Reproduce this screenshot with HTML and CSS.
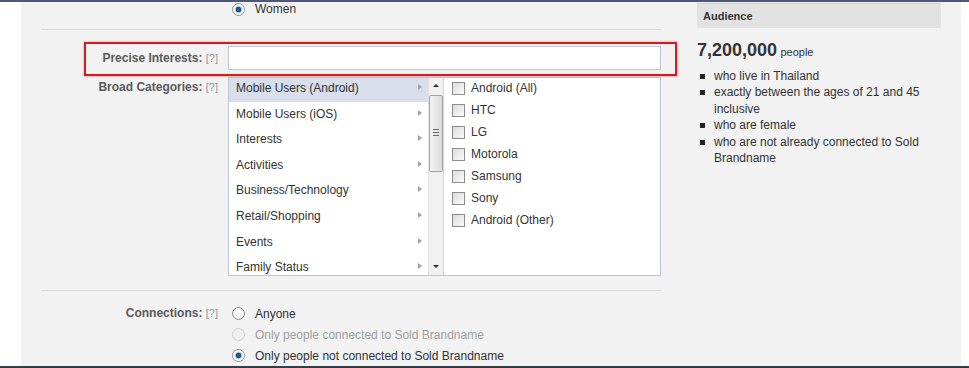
FILE: index.html
```html
<!DOCTYPE html>
<html lang="en">
<head>
    <meta charset="UTF-8">
    <title>Ad Targeting</title>
    <link rel="stylesheet" href="styles.css">
</head>
<body>
    <div class="topbar"></div>
    <div class="page">
        <div class="panel">
            <div class="form">
                <!-- Gender (scrolled) -->
                <div class="row row-women">
                    <div class="label"></div>
                    <div class="options">
                        <div class="opt"><span class="radio checked"></span>Women</div>
                    </div>
                </div>

                <div class="sep sep-top"></div>

                <!-- Precise Interests -->
                <div class="row row-precise">
                    <div class="label">Precise Interests: <span class="help">[?]</span></div>
                    <input class="text-input" type="text">
                </div>

                <!-- Broad Categories -->
                <div class="row row-broad">
                    <div class="label">Broad Categories: <span class="help">[?]</span></div>
                    <div class="picker">
                        <ul class="cats">
                            <li class="active">Mobile Users (Android)<span class="arrow"></span></li>
                            <li>Mobile Users (iOS)<span class="arrow"></span></li>
                            <li>Interests<span class="arrow"></span></li>
                            <li>Activities<span class="arrow"></span></li>
                            <li>Business/Technology<span class="arrow"></span></li>
                            <li>Retail/Shopping<span class="arrow"></span></li>
                            <li>Events<span class="arrow"></span></li>
                            <li>Family Status<span class="arrow"></span></li>
                        </ul>
                        <div class="scrollbar">
                            <span class="sb-up"></span>
                            <div class="sb-thumb"><span class="grip"></span></div>
                            <span class="sb-down"></span>
                        </div>
                        <ul class="subcats">
                            <li><span class="check"></span>Android (All)</li>
                            <li><span class="check"></span>HTC</li>
                            <li><span class="check"></span>LG</li>
                            <li><span class="check"></span>Motorola</li>
                            <li><span class="check"></span>Samsung</li>
                            <li><span class="check"></span>Sony</li>
                            <li><span class="check"></span>Android (Other)</li>
                        </ul>
                    </div>
                </div>

                <div class="sep sep-bottom"></div>

                <!-- Connections -->
                <div class="row row-conn">
                    <div class="label">Connections: <span class="help">[?]</span></div>
                    <div class="options">
                        <div class="opt"><span class="radio"></span>Anyone</div>
                        <div class="opt disabled"><span class="radio"></span>Only people connected to Sold Brandname</div>
                        <div class="opt"><span class="radio checked"></span>Only people not connected to Sold Brandname</div>
                    </div>
                </div>
            </div>

            <!-- Estimated audience -->
            <div class="audience">
                <div class="audience-head">Audience</div>
                <div class="reach"><span class="reach-num">7,200,000</span> <span class="reach-unit">people</span></div>
                <ul class="reach-list">
                    <li>who live in Thailand</li>
                    <li>exactly between the ages of 21 and 45 inclusive</li>
                    <li>who are female</li>
                    <li>who are not already connected to Sold Brandname</li>
                </ul>
            </div>
        </div>
    </div>
    <div class="bottombar"></div>
</body>
</html>
```

FILE: styles.css
```css
/* page frame */
body {
    margin: 0;
    padding: 0;
    background: #fff;
    font-family: "Liberation Sans", Arial, sans-serif;
    font-size: 12px;
    color: #333;
}

.topbar {
    height: 2px;
    background: #4d5776;
}

.bottombar {
    height: 2px;
    background: #363c46;
}

.page {
    height: 364px;
    overflow: hidden;
    padding-left: 21px;
}

.panel {
    width: 940px;
    height: 364px;
    background: #f2f2f2;
    display: flex;
    gap: 36px;
    padding-left: 20px;
    box-sizing: border-box;
}

/* form column */
.form {
    width: 620px;
}

.row {
    display: flex;
    gap: 10px;
}

.label {
    width: 177px;
    flex-shrink: 0;
    text-align: right;
    font-weight: bold;
    color: #5a5a5a;
}

.help {
    font-weight: normal;
    font-size: 11px;
    color: #999;
}

.sep {
    height: 1px;
    background: #dcdcdc;
}

.sep-top {
    margin-top: 13px;
}

.sep-bottom {
    margin-top: 14px;
}

.row-women {
    height: 13px;
    padding-top: 1px;
    line-height: 13px;
}

.row-precise {
    position: relative;
    margin-top: 16px;
    align-items: center;
}

/* red annotation round the field */
.row-precise::after {
    content: "";
    position: absolute;
    left: 43px;
    right: -16px;
    top: -4px;
    bottom: -6px;
    border: 2px solid #e0161b;
    box-shadow: 0 0 2px rgba(224, 22, 27, 0.5);
    pointer-events: none;
}

.text-input {
    width: 433px;
    height: 24px;
    margin: 0;
    padding: 0 4px;
    box-sizing: border-box;
    border: 1px solid #bdc7d8;
    background: #fff;
    font-family: inherit;
    font-size: 12px;
}

.row-broad {
    margin-top: 7px;
    align-items: flex-start;
}

.row-broad .label {
    line-height: 20px;
}

.row-conn {
    margin-top: 12px;
}

.row-conn .label {
    line-height: 21px;
}

/* radios */
.options {
    padding-left: 4px;
}

.opt {
    display: flex;
    align-items: center;
    height: 21px;
    color: #333;
}

.row-women .opt {
    height: 13px;
}

.opt.disabled {
    color: #a0a0a0;
}

.radio {
    width: 11px;
    height: 11px;
    border: 1px solid #8f8f8f;
    border-radius: 50%;
    margin-right: 10px;
    background: radial-gradient(circle at 50% 40%, #fff 0, #e6e6e6 100%);
}

.radio.checked {
    background: radial-gradient(circle, #2b6ea3 0, #15476f 2.5px, #a9c3d8 3px, #fff 4.5px);
}

.opt.disabled .radio {
    border-color: #cfcfcf;
    background: #f0f0f0;
}

/* category picker */
.picker {
    width: 433px;
    height: 199px;
    box-sizing: border-box;
    border: 1px solid #bdc7d8;
    background: #fff;
    display: flex;
    overflow: hidden;
}

.cats,
.subcats {
    list-style: none;
    margin: 0;
    padding: 0;
}

.cats {
    width: 199px;
    flex-shrink: 0;
}

.cats li {
    height: 24px;
    line-height: 20px;
    margin-bottom: 1.6px;
    padding: 0 6px 0 7px;
    display: flex;
    justify-content: space-between;
    align-items: flex-start;
}

.cats li.active {
    background: #d8dfea;
}

.arrow {
    width: 0;
    height: 0;
    margin-top: 6px;
    border-left: 4px solid #a3a3a3;
    border-top: 3.5px solid transparent;
    border-bottom: 3.5px solid transparent;
}

.scrollbar {
    width: 16px;
    flex-shrink: 0;
    background: #f0f0f0;
    border-left: 1px solid #e4e4e4;
    border-right: 1px solid #d6d6d6;
    box-sizing: border-box;
    position: relative;
}

.sb-up,
.sb-down {
    position: absolute;
    left: 4px;
    width: 0;
    height: 0;
    border-left: 3px solid transparent;
    border-right: 3px solid transparent;
}

.sb-up {
    top: 6px;
    border-bottom: 3px solid #333;
}

.sb-down {
    bottom: 7px;
    border-top: 3px solid #333;
}

.sb-thumb {
    position: absolute;
    left: 0;
    top: 17px;
    width: 14px;
    height: 77px;
    box-sizing: border-box;
    border: 1px solid #a3a3a3;
    border-radius: 2px;
    background: linear-gradient(to right, #f4f4f4, #dcdcdc);
}

.grip {
    position: absolute;
    left: 3px;
    top: 33px;
    width: 6px;
    height: 5px;
    border-top: 1px solid #666;
    border-bottom: 1px solid #666;
}

.grip::after {
    content: "";
    position: absolute;
    left: 0;
    top: 2px;
    width: 6px;
    height: 1px;
    background: #666;
}

.subcats {
    flex: 1;
    padding-left: 8px;
}

.subcats li {
    height: 22px;
    line-height: 20px;
    display: flex;
    align-items: flex-start;
}

.check {
    width: 11px;
    height: 11px;
    margin: 4px 6px 0 0;
    border: 1px solid #8c8c8c;
    background: linear-gradient(135deg, #dcdcdc, #fafafa);
}

/* audience box */
.audience {
    width: 244px;
    padding-top: 1px;
}

.audience-head {
    height: 24px;
    line-height: 24px;
    border-top: 1px solid #d0d0d0;
    background: #e2e2e2;
    padding-left: 6px;
    font-size: 11px;
    font-weight: bold;
    color: #333;
}

.reach {
    margin-top: 11px;
    line-height: 22px;
}

.reach-num {
    font-size: 18px;
    font-weight: bold;
    color: #333;
}

.reach-unit {
    font-size: 11px;
}

.reach-list {
    list-style: none;
    margin: 5px 0 0;
    padding: 0 18px 0 17px;
    line-height: 16.4px;
}

.reach-list li {
    position: relative;
}

.reach-list li::before {
    content: "";
    position: absolute;
    left: -14px;
    top: 6px;
    width: 5px;
    height: 5px;
    background: #222;
}
```
